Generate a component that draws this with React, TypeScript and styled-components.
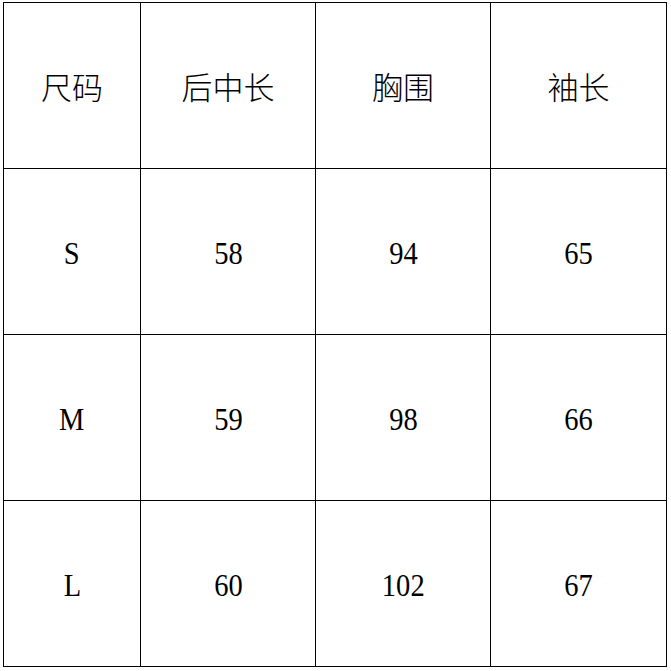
import styled, { createGlobalStyle } from "styled-components";

const GlobalStyle = createGlobalStyle`
  html, body {
    margin: 0;
    padding: 0;
    background: #ffffff;
  }
`;

const Page = styled.div`
  padding: 2px 0 0 3px;
`;

const SizeTable = styled.table`
  border-collapse: collapse;
  table-layout: fixed;
  width: 663px;
  color: #000;
`;

const Col = styled.col<{ $w: number }>`
  width: ${({ $w }) => $w}px;
`;

const Cell = styled.td<{ $head?: boolean }>`
  height: 165px;
  padding: 0;
  border: 1px solid #000;
  text-align: center;
  vertical-align: middle;
  line-height: 1;
  font-size: 31px;
  font-family: ${({ $head }) =>
    $head
      ? `"Noto Sans CJK SC", sans-serif`
      : `"Liberation Serif", "Noto Sans CJK SC", serif`};
  font-weight: ${({ $head }) => ($head ? 300 : 400)};
`;

const Value = styled.span`
  display: inline-block;
  transform: translateY(2px) scaleX(0.92);
`;

const header = ["尺码", "后中长", "胸围", "袖长"];
const rows = [
  ["S", "58", "94", "65"],
  ["M", "59", "98", "66"],
  ["L", "60", "102", "67"],
];

function App() {
  return (
    <>
      <GlobalStyle />
      <Page>
        <SizeTable>
          <colgroup>
            <Col $w={137} />
            <Col $w={175} />
            <Col $w={175} />
            <Col $w={176} />
          </colgroup>
          <tbody>
            <tr>
              {header.map((h) => (
                <Cell key={h} $head>
                  {h}
                </Cell>
              ))}
            </tr>
            {rows.map((r) => (
              <tr key={r[0]}>
                {r.map((v, i) => (
                  <Cell key={i}>
                    <Value>{v}</Value>
                  </Cell>
                ))}
              </tr>
            ))}
          </tbody>
        </SizeTable>
      </Page>
    </>
  );
}

export default App;
